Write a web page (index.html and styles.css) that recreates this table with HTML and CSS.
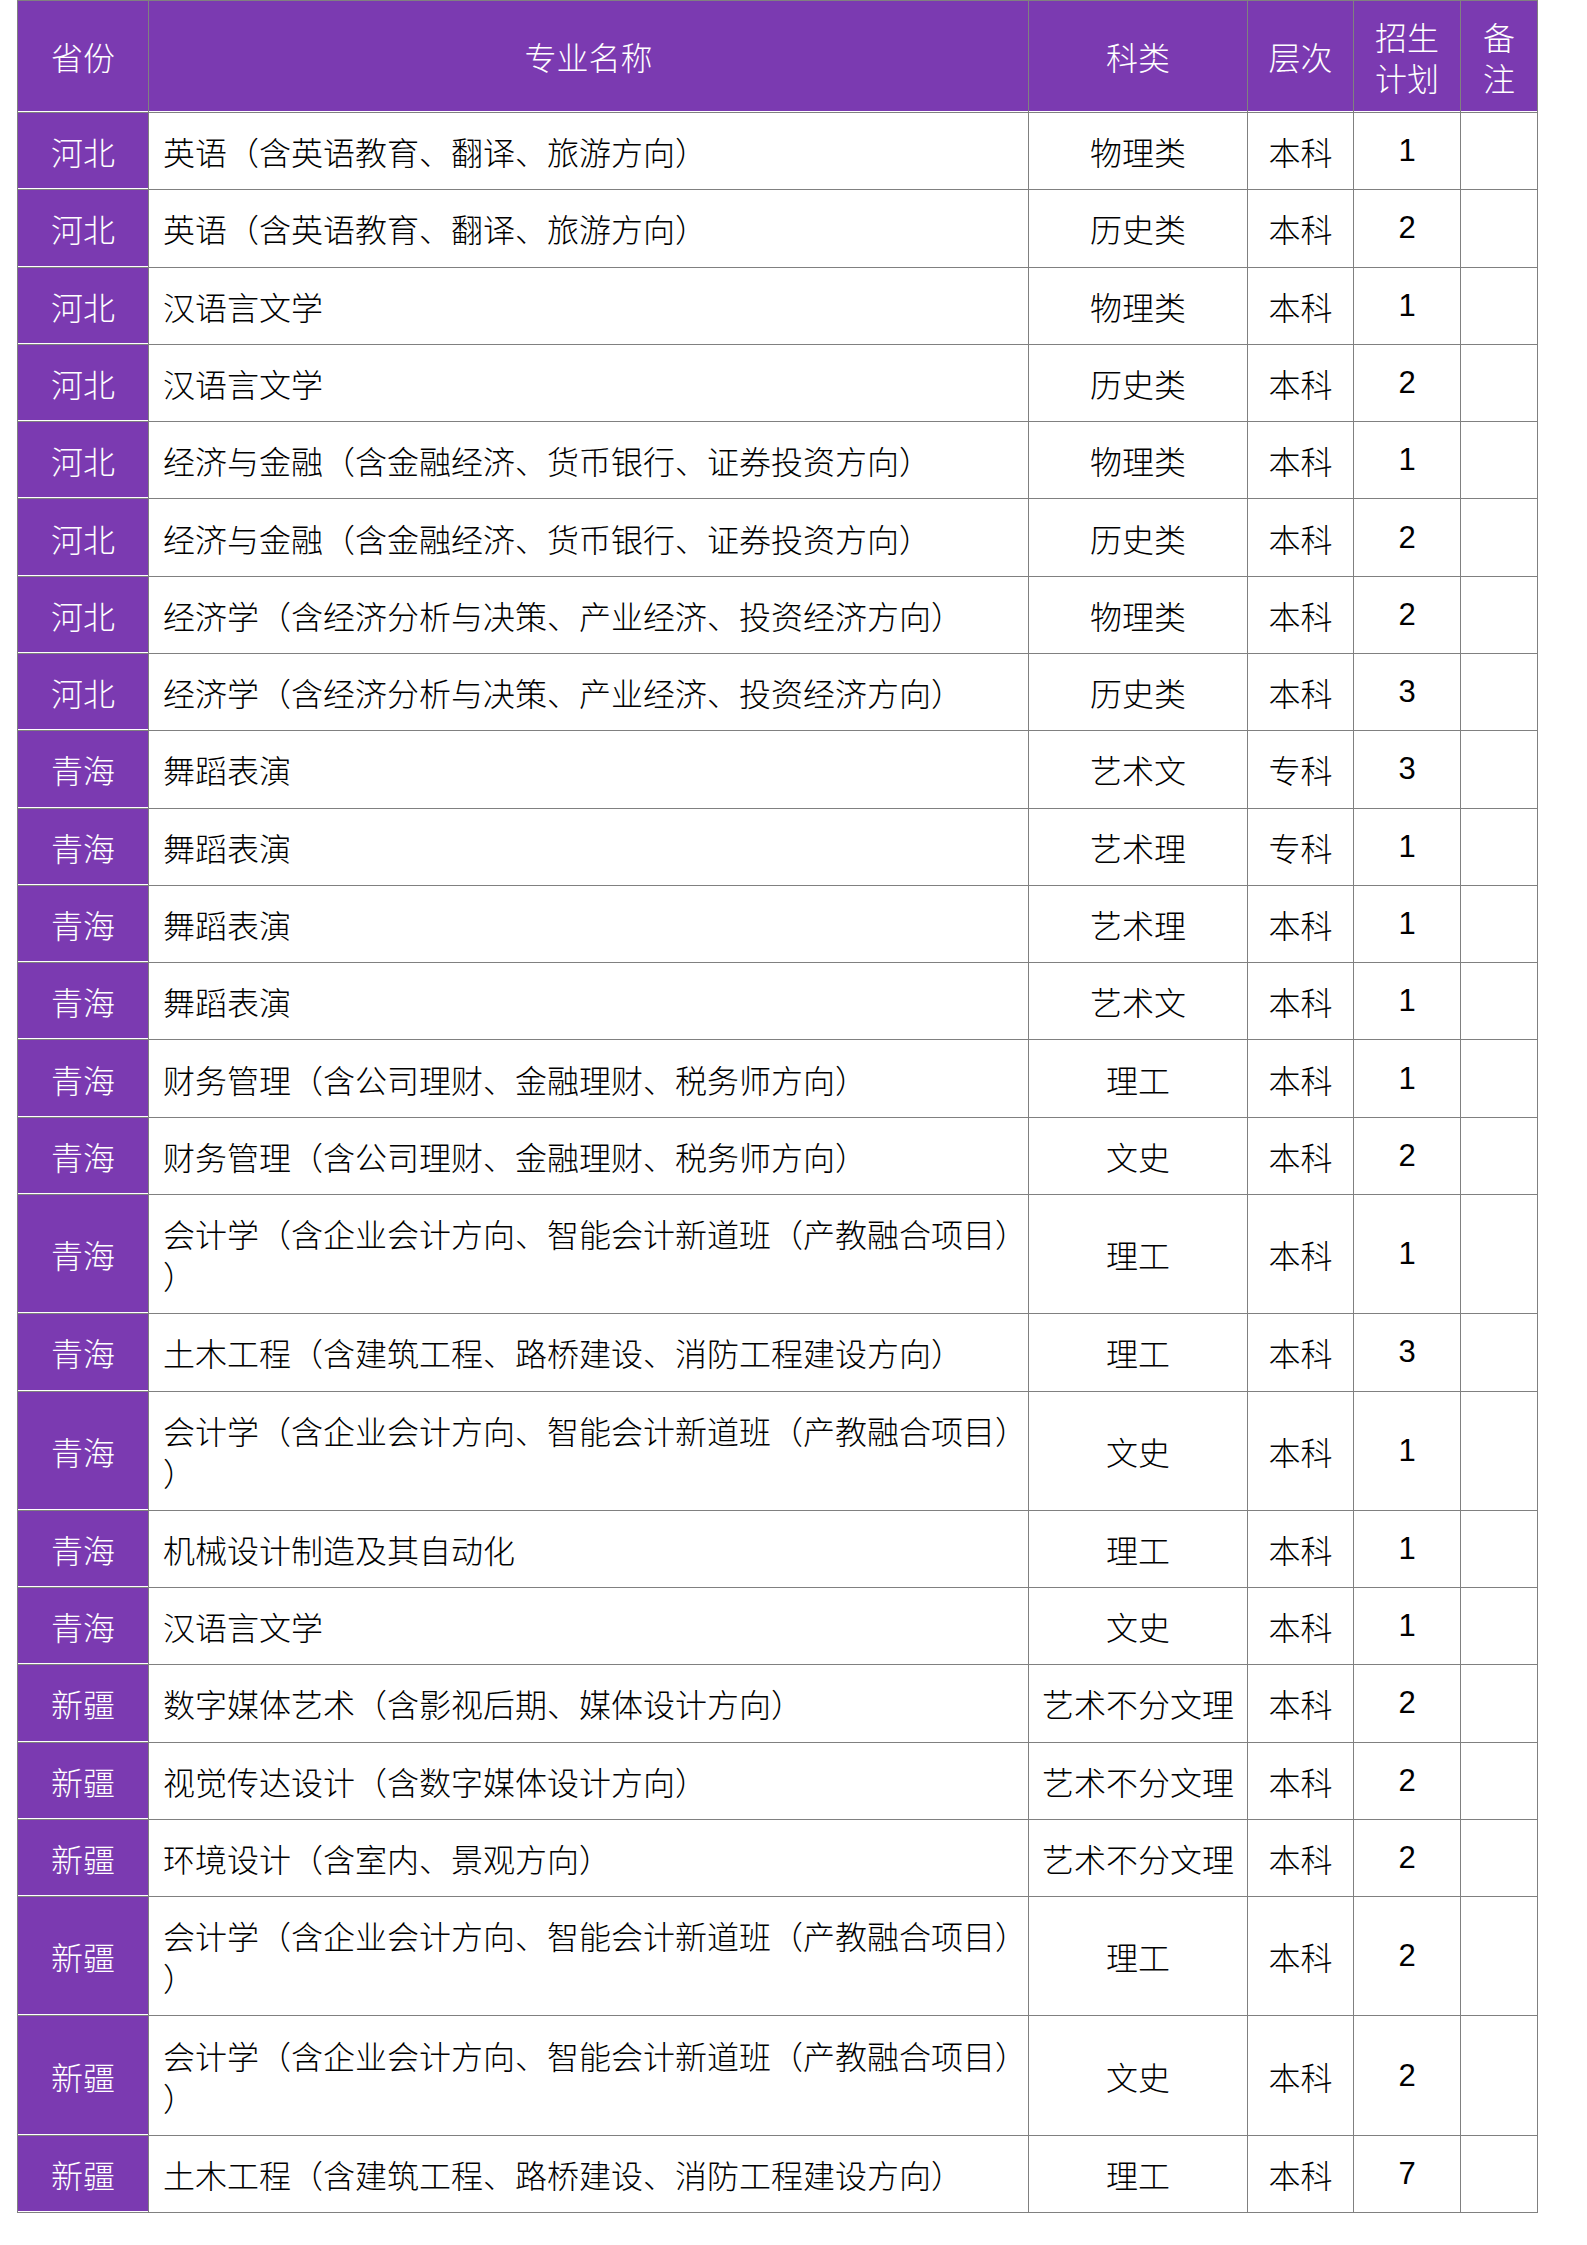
FILE: index.html
```html
<!DOCTYPE html>
<html lang="zh-CN">
<head>
<meta charset="utf-8">
<title>招生计划</title>
<link rel="stylesheet" href="styles.css">
</head>
<body>
<div class="wrap">
<table class="plan">
<colgroup>
<col class="c-prov"><col class="c-major"><col class="c-type"><col class="c-level"><col class="c-num"><col class="c-note">
</colgroup>
<thead>
<tr><th>省份</th><th>专业名称</th><th>科类</th><th>层次</th><th>招生<br>计划</th><th>备<br>注</th></tr>
</thead>
<tbody>
<tr><td class="prov">河北</td><td class="major">英语（含英语教育、翻译、旅游方向）</td><td>物理类</td><td>本科</td><td class="num">1</td><td></td></tr>
<tr><td class="prov">河北</td><td class="major">英语（含英语教育、翻译、旅游方向）</td><td>历史类</td><td>本科</td><td class="num">2</td><td></td></tr>
<tr><td class="prov">河北</td><td class="major">汉语言文学</td><td>物理类</td><td>本科</td><td class="num">1</td><td></td></tr>
<tr><td class="prov">河北</td><td class="major">汉语言文学</td><td>历史类</td><td>本科</td><td class="num">2</td><td></td></tr>
<tr><td class="prov">河北</td><td class="major">经济与金融（含金融经济、货币银行、证券投资方向）</td><td>物理类</td><td>本科</td><td class="num">1</td><td></td></tr>
<tr><td class="prov">河北</td><td class="major">经济与金融（含金融经济、货币银行、证券投资方向）</td><td>历史类</td><td>本科</td><td class="num">2</td><td></td></tr>
<tr><td class="prov">河北</td><td class="major">经济学（含经济分析与决策、产业经济、投资经济方向）</td><td>物理类</td><td>本科</td><td class="num">2</td><td></td></tr>
<tr><td class="prov">河北</td><td class="major">经济学（含经济分析与决策、产业经济、投资经济方向）</td><td>历史类</td><td>本科</td><td class="num">3</td><td></td></tr>
<tr><td class="prov">青海</td><td class="major">舞蹈表演</td><td>艺术文</td><td>专科</td><td class="num">3</td><td></td></tr>
<tr><td class="prov">青海</td><td class="major">舞蹈表演</td><td>艺术理</td><td>专科</td><td class="num">1</td><td></td></tr>
<tr><td class="prov">青海</td><td class="major">舞蹈表演</td><td>艺术理</td><td>本科</td><td class="num">1</td><td></td></tr>
<tr><td class="prov">青海</td><td class="major">舞蹈表演</td><td>艺术文</td><td>本科</td><td class="num">1</td><td></td></tr>
<tr><td class="prov">青海</td><td class="major">财务管理（含公司理财、金融理财、税务师方向）</td><td>理工</td><td>本科</td><td class="num">1</td><td></td></tr>
<tr><td class="prov">青海</td><td class="major">财务管理（含公司理财、金融理财、税务师方向）</td><td>文史</td><td>本科</td><td class="num">2</td><td></td></tr>
<tr><td class="prov">青海</td><td class="major">会计学（含企业会计方向、智能会计新道班（产教融合项目）<br>）</td><td>理工</td><td>本科</td><td class="num">1</td><td></td></tr>
<tr><td class="prov">青海</td><td class="major">土木工程（含建筑工程、路桥建设、消防工程建设方向）</td><td>理工</td><td>本科</td><td class="num">3</td><td></td></tr>
<tr><td class="prov">青海</td><td class="major">会计学（含企业会计方向、智能会计新道班（产教融合项目）<br>）</td><td>文史</td><td>本科</td><td class="num">1</td><td></td></tr>
<tr><td class="prov">青海</td><td class="major">机械设计制造及其自动化</td><td>理工</td><td>本科</td><td class="num">1</td><td></td></tr>
<tr><td class="prov">青海</td><td class="major">汉语言文学</td><td>文史</td><td>本科</td><td class="num">1</td><td></td></tr>
<tr><td class="prov">新疆</td><td class="major">数字媒体艺术（含影视后期、媒体设计方向）</td><td>艺术不分文理</td><td>本科</td><td class="num">2</td><td></td></tr>
<tr><td class="prov">新疆</td><td class="major">视觉传达设计（含数字媒体设计方向）</td><td>艺术不分文理</td><td>本科</td><td class="num">2</td><td></td></tr>
<tr><td class="prov">新疆</td><td class="major">环境设计（含室内、景观方向）</td><td>艺术不分文理</td><td>本科</td><td class="num">2</td><td></td></tr>
<tr><td class="prov">新疆</td><td class="major">会计学（含企业会计方向、智能会计新道班（产教融合项目）<br>）</td><td>理工</td><td>本科</td><td class="num">2</td><td></td></tr>
<tr><td class="prov">新疆</td><td class="major">会计学（含企业会计方向、智能会计新道班（产教融合项目）<br>）</td><td>文史</td><td>本科</td><td class="num">2</td><td></td></tr>
<tr><td class="prov">新疆</td><td class="major">土木工程（含建筑工程、路桥建设、消防工程建设方向）</td><td>理工</td><td>本科</td><td class="num">7</td><td></td></tr>
</tbody>
</table>
</div>
</body>
</html>
```
FILE: styles.css
```css
html, body {
  margin: 0;
  padding: 0;
  background: #ffffff;
}

.wrap {
  padding: 0 0 0 17px;
}

.plan {
  border-collapse: collapse;
  table-layout: fixed;
  width: 1520px;
  font-family: "Noto Sans CJK SC", "Liberation Serif", sans-serif;
  font-size: 32px;
  font-weight: 300;
  color: #000;
  text-spacing-trim: space-all;
}

.c-prov { width: 131px; }
.c-major { width: 880px; }
.c-type { width: 219px; }
.c-level { width: 106px; }
.c-num { width: 107px; }
.c-note { width: 77px; }

.plan th,
.plan td {
  border: 1px solid #808080;
  text-align: center;
  vertical-align: middle;
  line-height: 42px;
  padding: 17.15px 2px;
  white-space: nowrap;
}

.plan th {
  background: #7b3ab1;
  color: #fff;
  font-weight: 300;
  line-height: 41px;
  padding: 14.5px 2px 14.5px;
  box-shadow: inset 0 -1px 0 #fff;
}

.plan td.prov {
  background: #7b3ab1;
  color: #fff;
  box-shadow: inset 0 -1px 0 #fff;
}

.plan td.major {
  text-align: left;
  padding-left: 14px;
  padding-right: 1px;
}

.plan td.num {
  font-family: "Liberation Sans", Arial, sans-serif;
  font-size: 31px;
  font-weight: 400;
}
```
